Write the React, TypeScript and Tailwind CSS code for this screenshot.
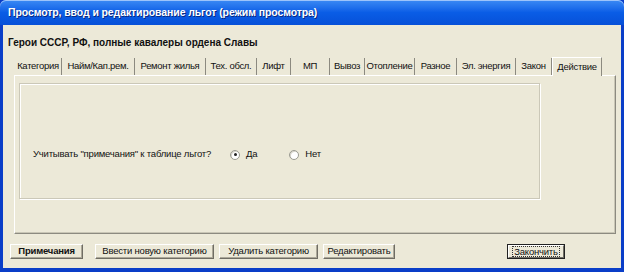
import React from 'react'

const tabs: { label: string; w: number }[] = [
  { label: 'Категория', w: 47 },
  { label: 'Найм/Кап.рем.', w: 73 },
  { label: 'Ремонт жилья', w: 71 },
  { label: 'Тех. обсл.', w: 51 },
  { label: 'Лифт', w: 34 },
  { label: 'МП', w: 39 },
  { label: 'Вывоз', w: 35 },
  { label: 'Отопление', w: 50 },
  { label: 'Разное', w: 42 },
  { label: 'Эл. энергия', w: 59 },
  { label: 'Закон', w: 36 },
]

function Radio({ checked, label }: { checked?: boolean; label: string }) {
  return (
    <div className="flex items-center gap-[6px]">
      <span className="w-[10px] h-[10px] rounded-full bg-white border border-[#9a9a90] shadow-[inset_1px_1px_0_#d8d6cc] flex items-center justify-center">
        {checked && <span className="w-[3px] h-[3px] rounded-full bg-[#222]" />}
      </span>
      <span>{label}</span>
    </div>
  )
}

function Btn({ children, className = '' }: { children: React.ReactNode; className?: string }) {
  return (
    <div
      className={`h-[15px] flex items-center justify-center whitespace-nowrap border-t border-l border-white border-r border-b border-r-[#6f6d64] border-b-[#6f6d64] shadow-[inset_-1px_-1px_0_#aca899] bg-[#ece9d8] ${className}`}
    >
      {children}
    </div>
  )
}

export default function App() {
  return (
    <div className="w-[624px] h-[272px] flex flex-col bg-[#0a3ec8] overflow-hidden font-['Liberation_Sans',sans-serif] text-[#111]">
      <div className="h-[25px] shrink-0 flex items-center pl-[8px] rounded-t-[6px] bg-gradient-to-b from-[#3b8af4] via-[#0a5de6] to-[#0750d8] shadow-[inset_0_1px_0_#9cc4fb]">
        <span className="text-white font-bold text-[10.5px] tracking-[-0.1px] [text-shadow:1px_1px_0_#0a2a80]">
          Просмотр, ввод и редактирование льгот (режим просмотра)
        </span>
      </div>

      <div className="flex-1 mx-[3px] mb-[4px] bg-[#ece9d8] flex flex-col">
        <div className="pt-[12px] pl-[5px] h-[31px] text-[10px] font-bold leading-[12px]">
          Герои СССР, РФ, полные кавалеры ордена Славы
        </div>

        <div className="h-[19px] flex items-end pl-[12px] text-[9.5px] tracking-[-0.3px] relative z-10">
          {tabs.map((t) => (
            <div
              key={t.label}
              style={{ width: t.w }}
              className="h-[17px] flex items-center justify-center border-r border-[#8c8a80] whitespace-nowrap"
            >
              {t.label}
            </div>
          ))}
          <div className="w-[50px] h-[19px] -mb-[1px] bg-[#ece9d8] flex items-start pt-[2px] justify-center border-t border-l border-white border-r border-r-[#8c8a80]">
            Действие
          </div>
        </div>

        <div className="ml-[11px] mr-[5px] h-[159px] border-t border-l border-white border-r border-b border-r-[#8c8a80] border-b-[#8c8a80] shadow-[inset_-1px_-1px_0_#c9c6b6] pt-[7px] pl-[4px]">
          <div className="w-[521px] h-[116px] border border-[#cbc8b8] shadow-[inset_1px_1px_0_#fff,1px_1px_0_#fff] flex items-center pl-[13px] pt-[27px] text-[9.5px] tracking-[-0.2px]">
            <span className="w-[197px] whitespace-nowrap">Учитывать "примечания" к таблице льгот?</span>
            <Radio checked label="Да" />
            <div className="w-[32px]" />
            <Radio label="Нет" />
          </div>
        </div>

        <div className="flex items-center mt-[10px] pl-[7px] text-[9.5px] tracking-[-0.2px]">
          <Btn className="w-[73px] font-bold">Примечания</Btn>
          <Btn className="w-[119px] ml-[12px]">Ввести новую категорию</Btn>
          <Btn className="w-[99px] ml-[5px]">Удалить категорию</Btn>
          <Btn className="w-[72px] ml-[5px]">Редактировать</Btn>
          <div className="ml-[112px] w-[58px] h-[15px] border border-[#222] flex">
            <div className="flex-1 flex items-center justify-center border-t border-l border-white border-r border-b border-r-[#6f6d64] border-b-[#6f6d64]">
              <span className="border border-dotted border-[#333] px-[1px] leading-[9px]">Закончить</span>
            </div>
          </div>
        </div>
      </div>
    </div>
  )
}
